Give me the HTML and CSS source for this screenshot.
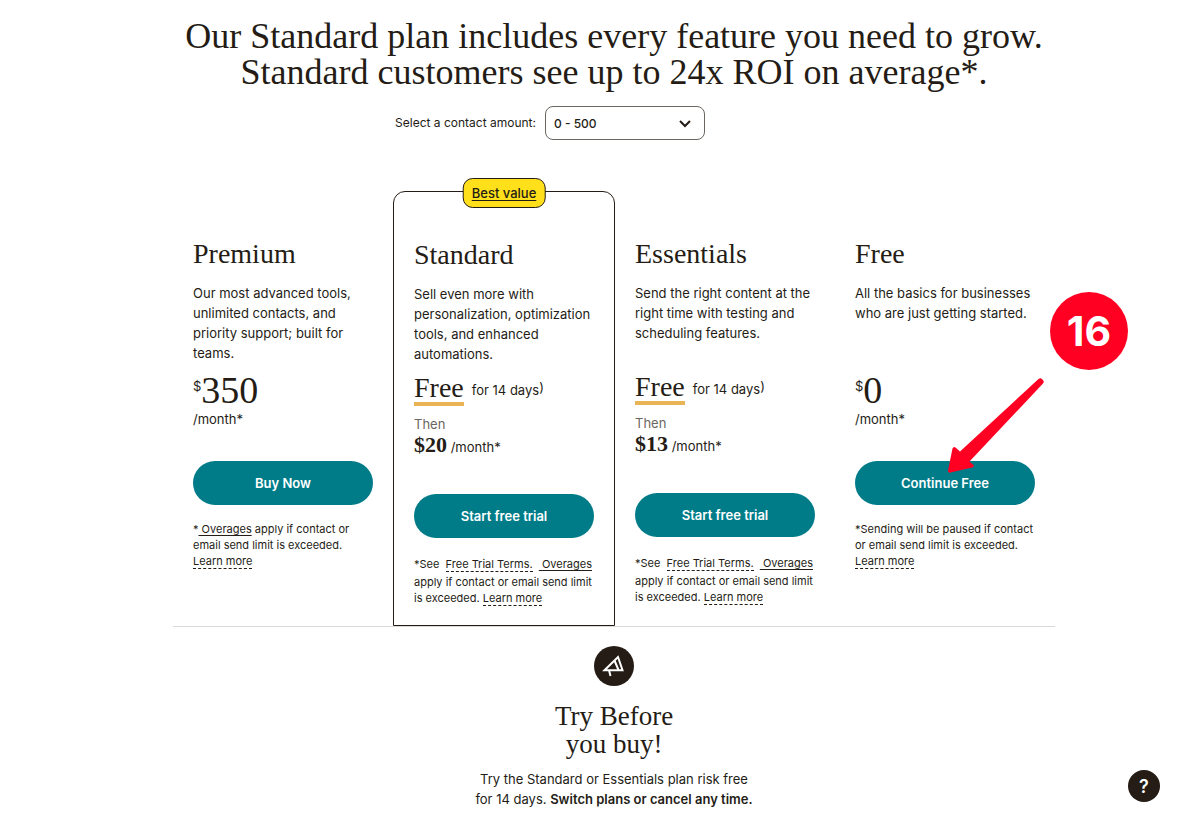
FILE: index.html
```html
<!DOCTYPE html>
<html lang="en">
<head>
  <meta charset="UTF-8" />
  <meta name="viewport" content="width=device-width, initial-scale=1.0" />
  <title>Pricing plans</title>
  <link rel="stylesheet" href="styles.css">
</head>
<body>
  <main class="page">
    <h1>Our Standard plan includes every feature you need to grow.<br>Standard customers see up to 24x ROI on average*.</h1>

    <div class="contacts">
      <label for="contactAmount">Select a contact amount:</label>
      <div class="select-wrap">
        <select id="contactAmount">
          <option>0 - 500</option>
          <option>501 - 1,500</option>
          <option>1,501 - 2,500</option>
        </select>
        <svg class="chevron" viewBox="0 0 12 8" aria-hidden="true"><path d="M1 1l5 5 5-5" fill="none" stroke="currentColor" stroke-width="2"/></svg>
      </div>
    </div>

    <section class="plans">
      <article class="plan">
        <h2>Premium</h2>
        <p class="desc">Our most advanced tools,<br>unlimited contacts, and<br>priority support; built for<br>teams.</p>
        <p class="price"><sup>$</sup>350</p>
        <p class="per-month">/month*</p>
        <button class="cta">Buy Now</button>
        <p class="note">*<a class="solid" href="#">&nbsp;Overages</a> apply if contact or<br>email send limit is exceeded.<br><a href="#">Learn more</a></p>
      </article>

      <article class="plan featured">
        <a class="best-value" href="#">Best value</a>
        <h2>Standard</h2>
        <p class="desc">Sell even more with<br>personalization, optimization<br>tools, and enhanced<br>automations.</p>
        <p class="trial"><span class="free">Free</span><span>for 14 days<sup>)</sup></span></p>
        <p class="then">Then</p>
        <p class="after"><strong>$20</strong> /month*</p>
        <button class="cta">Start free trial</button>
        <p class="note"><span class="terms">*See &nbsp;<a href="#">Free Trial Terms.</a> &nbsp;<a class="solid" href="#">&nbsp;Overages</a></span>apply if contact or email send limit<br>is exceeded. <a href="#">Learn more</a></p>
      </article>

      <article class="plan">
        <h2>Essentials</h2>
        <p class="desc">Send the right content at the<br>right time with testing and<br>scheduling features.</p>
        <p class="trial"><span class="free">Free</span><span>for 14 days<sup>)</sup></span></p>
        <p class="then">Then</p>
        <p class="after"><strong>$13</strong> /month*</p>
        <button class="cta">Start free trial</button>
        <p class="note"><span class="terms">*See &nbsp;<a href="#">Free Trial Terms.</a> &nbsp;<a class="solid" href="#">&nbsp;Overages</a></span>apply if contact or email send limit<br>is exceeded. <a href="#">Learn more</a></p>
      </article>

      <article class="plan">
        <h2>Free</h2>
        <p class="desc">All the basics for businesses<br>who are just getting started.</p>
        <p class="price"><sup>$</sup>0</p>
        <p class="per-month">/month*</p>
        <button class="cta">Continue Free</button>
        <p class="note">*Sending will be paused if contact<br>or email send limit is exceeded.<br><a href="#">Learn more</a></p>
        <span class="step">16</span>
        <svg class="arrow" viewBox="0 0 98 96" aria-hidden="true"><path d="M91.500 1Q93.500-.5 95 1L96.200 2.400Q97.500 3.800 96 5.500L22.500 83.500 26.500 87Q27.500 89 25 89.600L3.500 94.600Q.8 95 1 92.500L5.500 70.500Q6.500 68 8.500 69.500L13 73.500Z" fill="#ff0022"/></svg>
      </article>
    </section>

    <section class="try">
      <svg class="try-icon" viewBox="0 0 40 40" aria-hidden="true">
        <circle cx="20" cy="20" r="20" fill="#241c15"/>
        <path d="M10.500 24.300L24 11 28.500 24.300ZM20.500 14.500L24.500 24M15 24.300L16.500 30" fill="none" stroke="#fff" stroke-width="2"/>
      </svg>
      <h2>Try Before<br>you buy!</h2>
      <p>Try the Standard or Essentials plan risk free<br>for 14 days. <strong>Switch plans or cancel any time.</strong></p>
    </section>
  </main>

  <button class="help" aria-label="Help">?</button>
</body>
</html>
```
FILE: styles.css
```css
* {
  margin: 0;
  padding: 0;
  box-sizing: border-box;
}

body {
  padding-left: 48px;
  background: #fff;
  color: #241c15;
  font-family: Inter, "Liberation Sans", sans-serif;
  font-size: 13px;
  line-height: 20px;
}

h1, h2 {
  font-family: "Liberation Serif", serif;
  font-weight: normal;
}

a {
  color: inherit;
}

button {
  border: none;
  font-family: inherit;
  cursor: pointer;
}

.page {
  max-width: 882px;
  margin: 0 auto;
  padding: 18px 0 10px;
}

h1 {
  font-size: 36px;
  line-height: 36px;
  text-align: center;
  white-space: nowrap;
}

.contacts {
  display: flex;
  justify-content: center;
  align-items: center;
  gap: 9px;
  margin-top: 16px;
  padding-right: 128px;
  font-size: 12px;
}

.select-wrap {
  position: relative;
}

select {
  display: block;
  width: 160px;
  height: 34px;
  padding: 0 8px;
  appearance: none;
  background: #fff;
  border: 1px solid #6b6661;
  border-radius: 8px;
  color: inherit;
  font-family: inherit;
  font-size: 12px;
  font-weight: 500;
}

.chevron {
  position: absolute;
  top: 14px;
  right: 14px;
  width: 12px;
  height: 8px;
  pointer-events: none;
}

/* plan columns */
.plans {
  display: flex;
  margin-top: 51px;
  border-bottom: 1px solid #dbd9d6;
}

.plan {
  position: relative;
  flex: 1 1 0;
  box-sizing: content-box;
  padding: 49px 20px 19px;
}

.featured {
  border: 1px solid #241c15;
  border-radius: 12px 12px 0 0;
}

.plan h2,
.try h2 {
  font-size: 27px;
  line-height: 28px;
}

.plan h2 {
  font-size: 28px;
}

.desc {
  min-height: 80px;
  margin: 15px 0 9px;
  white-space: nowrap;
}

.price {
  font-family: "Liberation Serif", serif;
  font-size: 38px;
  line-height: 37px;
}

.price sup {
  font-family: Inter, sans-serif;
  font-size: 13px;
  line-height: 13px;
  vertical-align: 12px;
}

.per-month {
  margin-bottom: 32px;
}

.trial {
  display: flex;
  align-items: center;
  gap: 8px;
  padding-top: 1px;
  margin-bottom: 8px;
}

.trial sup {
  font-size: 13px;
  line-height: 0;
  vertical-align: 3px;
}

.free {
  border-bottom: 4px solid #e8b455;
  font-family: "Liberation Serif", serif;
  font-size: 28px;
  line-height: 28px;
}

.then {
  color: #6b6661;
}

.after {
  height: 24px;
  margin-bottom: 36px;
  line-height: 22px;
}

.after strong {
  font-family: "Liberation Serif", serif;
  font-size: 22px;
}

.cta {
  display: block;
  width: 100%;
  height: 44px;
  margin-bottom: 16px;
  background: #007c89;
  border-radius: 22px;
  color: #fff;
  font-size: 13px;
  font-weight: 600;
}

.note {
  font-size: 11px;
  line-height: 16px;
  white-space: nowrap;
}

.note a {
  border-bottom: 1px dashed #241c15;
  text-decoration: none;
}

.note .solid {
  border-bottom: none;
  text-decoration: underline;
  text-underline-offset: 2px;
}

.terms {
  display: block;
  line-height: 20px;
}

.best-value {
  position: absolute;
  top: -14px;
  left: 50%;
  transform: translateX(-50%);
  padding: 4px 8px;
  background: #ffe01b;
  border: 1px solid #241c15;
  border-radius: 10px;
  font-weight: 500;
  white-space: nowrap;
  text-underline-offset: 2px;
}

/* step marker over the free plan */
.step {
  position: absolute;
  top: 101px;
  left: 215px;
  width: 78px;
  height: 78px;
  border-radius: 50%;
  background: #ff0022;
  color: #fff;
  font-size: 41px;
  font-weight: 700;
  line-height: 78px;
  text-align: center;
}

.arrow {
  position: absolute;
  top: 187px;
  left: 112px;
  width: 98px;
  height: 96px;
  pointer-events: none;
}

.try {
  padding-top: 19px;
  text-align: center;
}

.try-icon {
  display: block;
  width: 40px;
  height: 40px;
  margin: 0 auto 16px;
}

.try h2 {
  margin-bottom: 11px;
}

.try strong {
  font-weight: 600;
}

.help {
  position: fixed;
  right: 20px;
  bottom: 18px;
  width: 32px;
  height: 32px;
  border-radius: 50%;
  background: #241c15;
  color: #fff;
  font-size: 18px;
  font-weight: 600;
}
```
